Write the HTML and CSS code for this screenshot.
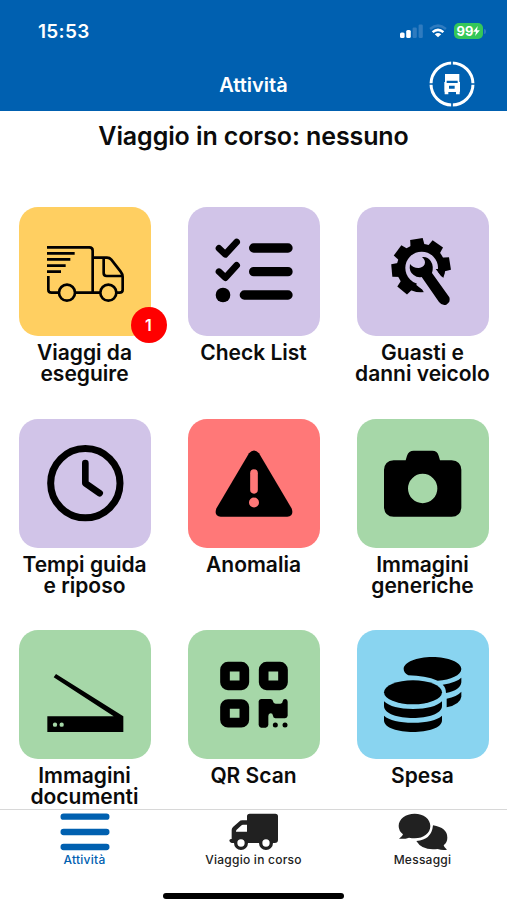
FILE: index.html
```
<!DOCTYPE html>
<html lang="it">

<head>
    <meta charset="utf-8">
    <title>Attività</title>
    <link rel="stylesheet" href="styles.css">
</head>

<body>
    <div class="header">
        <div class="statusbar">
            <span class="time">15:53</span>
            <div class="status-icons">
                <svg class="signal" viewBox="0 0 24 14">
                    <rect x="0" y="8.5" width="4.6" height="5.5" rx="1.5" fill="#fff"/>
                    <rect x="6.2" y="6" width="4.6" height="8" rx="1.5" fill="#fff"/>
                    <rect x="12.6" y="3.4" width="4.2" height="10.6" rx="1.3" fill="#2f7bbf"/>
                    <rect x="18.6" y="0.4" width="4.2" height="13.6" rx="1.3" fill="#2f7bbf"/>
                </svg>
                <svg class="wifi" viewBox="0 0 20 15" fill="none" stroke-width="2.8">
                    <path d="M1.2 5.2Q10 -2.2 18.8 5.2" stroke="#2f7bbf"/>
                    <path d="M4 8.8Q10 3.6 16 8.8" stroke="#fff"/>
                    <path d="M10 14.4L6.4 11Q10 8.2 13.6 11Z" fill="#fff"/>
                </svg>
                <div class="battery">99<svg viewBox="0 0 8 12"><path d="M5.5 0L0 6.8H3.4L2.3 12L8 5.2H4.6Z" fill="#fff"/></svg></div>
                <span class="battery-tip"></span>
            </div>
        </div>
        <div class="titlebar">
            <h1>Attività</h1>
            <svg class="truck-button" viewBox="147 183 138 138">
                <circle cx="216" cy="252" r="63" fill="none" stroke="#fff" stroke-width="9"/>
                <path d="M216 183V198M216 306V321M147 252H162M270 252H285" stroke="#0060b0" stroke-width="5"/>
                <path d="M195 222H238V246H240V275H239V283H228V276H205V283H194V275H193V246H195Z" fill="#fff"/>
                <path d="M200 242H233V249H200ZM207 257H224V266H207Z" fill="#0060b0"/>
            </svg>
        </div>
    </div>

    <div class="content">
        <h2>Viaggio in corso: nessuno</h2>
        <div class="grid">
            <div class="item">
                <div class="tile yellow">
                    <svg viewBox="57 36 396 387" fill="none" stroke="#000" stroke-width="8">
                        <path d="M141 157H268Q278 157 278 167V293M141 175H224M141 193H211M141 212H197M141 230H183"/>
                        <path d="M145 243V284Q145 293 155 293H176M226 293H300M278 188H321Q329 188 334 194L362 230Q368 238 368 245V284Q368 293 358 293H350M311 188V234Q311 243 320 243H368"/>
                        <circle cx="201" cy="293" r="24"/>
                        <circle cx="325" cy="293" r="24"/>
                    </svg>
                    <span class="badge">1</span>
                </div>
                <p>Viaggi da<br>eseguire</p>
            </div>
            <div class="item">
                <div class="tile purple">
                    <svg viewBox="24 36 396 387" fill="none" stroke="#000" stroke-linecap="round" stroke-linejoin="round">
                        <path d="M117 160L136 178L170 141M117 230L136 248L170 211" stroke-width="20"/>
                        <path d="M221 159H324M221 230H324M193 300H324" stroke-width="28"/>
                        <circle cx="129" cy="300" r="22" fill="#000" stroke="none"/>
                    </svg>
                </div>
                <p>Check List</p>
            </div>
            <div class="item">
                <div class="tile purple">
                    <svg viewBox="36 36 396 387">
                        <g transform="translate(228 219)">
                            <circle r="73"/>
                            <path id="tooth" d="M-22 -60L-19 -88H19L22 -60Z" transform="rotate(-9)"/>
                            <use href="#tooth" transform="rotate(44)"/>
                            <use href="#tooth" transform="rotate(90)"/>
                            <use href="#tooth" transform="rotate(-44)"/>
                            <use href="#tooth" transform="rotate(-86)"/>
                            <use href="#tooth" transform="rotate(-131)"/>
                        </g>
                        <path d="M214 270L232 284L260 330H330L300 252L288 243L270 219L228 219Z" fill="#d1c4e8"/>
                        <circle cx="230" cy="219" r="49" fill="#d1c4e8"/>
                        <path d="M198 262L232 285L214 287L196 276ZM272 222L290 244L298 222Z"/>
                        <path d="M195 207Q191 230 206 240Q217 249 230 246L282 321Q291 333 304 329Q318 321 313 307L261 234Q267 213 257 198Q248 184 231 186Q243 196 239 208Q234 218 222 219Q205 220 195 207Z"/>
                    </svg>
                </div>
                <p>Guasti e<br>danni veicolo</p>
            </div>
            <div class="item">
                <div class="tile purple">
                    <svg viewBox="27 25.5 396 387" fill="none" stroke="#000" stroke-linecap="round" stroke-linejoin="round">
                        <circle cx="226" cy="218" r="104" stroke-width="21"/>
                        <path d="M226 158V218L269 248" stroke-width="20"/>
                    </svg>
                </div>
                <p>Tempi guida<br>e riposo</p>
            </div>
            <div class="item">
                <div class="tile red">
                    <svg viewBox="24 25.5 396 387">
                        <path d="M207 128Q222 112 237 128L335 294Q343 316 322 319H122Q101 316 109 294Z"/>
                        <path d="M222 188V238" stroke="#ff7878" stroke-width="23" stroke-linecap="round"/>
                        <circle cx="222" cy="276" r="15" fill="#ff7878"/>
                    </svg>
                </div>
                <p>Anomalia</p>
            </div>
            <div class="item">
                <div class="tile green">
                    <svg viewBox="36 25.5 396 387">
                        <path fill-rule="evenodd" d="M146 149H182L186 136Q191 121 206 121H262Q277 121 281 136L285 149H320Q348 151 349 178V291Q347 318 320 319H146Q119 318 117 291V178Q118 151 146 149ZM233 190A44 44 0 1 0 233 278A44 44 0 1 0 233 190Z"/>
                    </svg>
                </div>
                <p>Immagini<br>generiche</p>
            </div>
            <div class="item">
                <div class="tile green">
                    <svg viewBox="27 30 396 387">
                        <path d="M138 162L340 289V336H112V289H311L131 172Z"/>
                        <circle cx="135" cy="314" r="6.5" fill="#a6d7a8"/>
                        <circle cx="155" cy="314" r="6.5" fill="#a6d7a8"/>
                    </svg>
                </div>
                <p>Immagini<br>documenti</p>
            </div>
            <div class="item">
                <div class="tile green">
                    <svg viewBox="24 30 396 387">
                        <g fill="none" stroke="#000" stroke-width="29">
                            <rect x="135" y="140" width="58" height="56" rx="9"/>
                            <rect x="251" y="140" width="58" height="56" rx="9"/>
                            <rect x="135" y="252" width="58" height="56" rx="9"/>
                        </g>
                        <path d="M243 237H272Q279 238 279 244Q280 251 287 251H301Q308 251 308 244Q309 237 316 237Q323 238 323 245V287Q322 294 315 295H286Q279 294 279 287Q278 280 272 280Q265 281 265 288V315Q264 322 257 323H243Q237 322 236 315V244Q237 238 243 237Z"/>
                        <circle cx="286" cy="315" r="7.5"/>
                        <circle cx="315" cy="315" r="7.5"/>
                    </svg>
                </div>
                <p>QR Scan</p>
            </div>
            <div class="item">
                <div class="tile blue">
                    <svg viewBox="36 30 396 387">
                        <path d="M190 166Q176 158 176 147C176 127 215 111 262 111S349 127 349 147C349 165 317 180 278 182Q240 167 190 166Z"/>
                        <path d="M349 173V187Q346 211 303 219Q303 202 293 194Q335 187 349 173ZM349 215V230Q346 253 305 262V236Q336 230 349 215Z"/>
                        <ellipse cx="204" cy="217" rx="87" ry="36"/>
                        <path d="M117 244Q141 267 204 267T291 244V258C291 306 117 306 117 258ZM117 287Q141 308 204 308T291 287V301C291 348 117 348 117 301Z"/>
                    </svg>
                </div>
                <p>Spesa</p>
            </div>
        </div>
    </div>

    <div class="tabbar">
        <a class="tab active">
            <svg viewBox="181 70 150 114">
                <path d="M192 81H320M192 127H320M192 172H320" stroke="#0060b0" stroke-width="19" stroke-linecap="round"/>
            </svg>
            <span>Attività</span>
        </a>
        <a class="tab">
            <svg viewBox="686 70 150 114" fill="#212121">
                <path fill-rule="evenodd" d="M748 72H825Q833 72 833 80V151Q833 160 823 160H694Q687 159 687 152Q688 148 694 148V121Q694 116 698 112L716 96Q720 92 726 92H740V80Q740 72 748 72ZM707 126H740V105H728Q725 105 722 108L709 120Q707 122 707 126Z"/>
                <circle cx="722" cy="160" r="16" fill="#fff" stroke="#212121" stroke-width="10"/>
                <circle cx="797" cy="160" r="16" fill="#fff" stroke="#212121" stroke-width="10"/>
            </svg>
            <span>Viaggio in corso</span>
        </a>
        <a class="tab">
            <svg viewBox="1191 70 150 114" fill="#212121">
                <path d="M1241 72C1268 72 1288 88 1288 109S1268 146 1241 146Q1233 146 1224 144Q1210 149 1194 147Q1205 140 1206 134Q1193 124 1193 109C1193 88 1214 72 1241 72Z"/>
                <path d="M1296 107Q1339 114 1339 144Q1339 158 1328 167Q1329 174 1338 180Q1323 182 1310 178Q1264 184 1246 154Q1292 151 1296 107Z"/>
            </svg>
            <span>Messaggi</span>
        </a>
    </div>
    <div class="home-indicator"></div>
</body>

</html>
```
FILE: styles.css
```
* {
    box-sizing: border-box;
}

body {
    margin: 0;
    height: 900px;
    display: flex;
    flex-direction: column;
    overflow: hidden;
    background-color: #fff;
    color: #0b0b0b;
    font-family: Inter, "Liberation Sans", sans-serif;
}

h1, h2, p {
    margin: 0;
}

svg {
    display: block;
}

/* Blue header with the phone status bar */
.header {
    height: 111px;
    flex: none;
    background-color: #0060b0;
    color: #fff;
}

.statusbar {
    height: 58px;
    padding: 4px 21px 0 38px;
    display: flex;
    align-items: center;
    justify-content: space-between;
}

.time {
    font-size: 19px;
    font-weight: 600;
    letter-spacing: 0.3px;
}

.status-icons {
    display: flex;
    align-items: center;
}

.signal {
    width: 24px;
    height: 14px;
    margin-right: 5px;
}

.wifi {
    width: 18px;
    height: 14px;
    margin-right: 7px;
}

.battery {
    width: 29px;
    height: 16px;
    border-radius: 5px;
    background-color: #34c759;
    display: flex;
    align-items: center;
    justify-content: center;
    font-size: 13px;
    font-weight: 700;
}

.battery svg {
    width: 7px;
    height: 10px;
}

.battery-tip {
    width: 2px;
    height: 5px;
    margin-left: 1px;
    border-radius: 0 2px 2px 0;
    background-color: #2f7bbf;
}

.titlebar {
    height: 53px;
    padding: 0 32px;
    display: grid;
    grid-template-columns: 46px 1fr 46px;
    align-items: center;
}

.titlebar h1 {
    grid-column: 2;
    text-align: center;
    font-size: 20px;
    font-weight: 600;
}

.truck-button {
    width: 46px;
    height: 46px;
    margin-bottom: 2px;
}

/* Activities */
.content {
    flex: none;
    height: 698px;
    overflow: hidden;
}

.content h2 {
    height: 96px;
    padding-top: 9px;
    text-align: center;
    font-size: 25px;
    line-height: 32px;
    font-weight: 600;
    letter-spacing: -0.1px;
}

.grid {
    display: grid;
    grid-template-columns: repeat(3, 1fr);
    grid-auto-rows: 211.5px;
}

.item {
    display: flex;
    flex-direction: column;
    align-items: center;
}

.item p {
    margin-top: 6px;
    text-align: center;
    white-space: nowrap;
    font-size: 21px;
    line-height: 21px;
    font-weight: 600;
}

.tile {
    position: relative;
    width: 132px;
    height: 129px;
    border-radius: 19px;
}

.tile svg {
    width: 132px;
    height: 129px;
}

.yellow {
    background-color: #ffcf61;
}

.purple {
    background-color: #d1c4e8;
}

.red {
    background-color: #ff7878;
}

.green {
    background-color: #a6d7a8;
}

.blue {
    background-color: #89d4f0;
}

.badge {
    position: absolute;
    right: -16px;
    bottom: -7px;
    width: 36px;
    height: 36px;
    border-radius: 50%;
    background-color: #ff0000;
    color: #fff;
    text-align: center;
    font-size: 16px;
    line-height: 36px;
    font-weight: 600;
}

/* Bottom tabs */
.tabbar {
    flex: none;
    height: 84px;
    display: grid;
    grid-template-columns: repeat(3, 1fr);
    border-top: 1px solid #d8d8d8;
}

.tab {
    display: flex;
    flex-direction: column;
    align-items: center;
    padding-top: 3px;
    color: #212121;
    font-size: 12px;
    line-height: 18px;
    font-weight: 500;
    letter-spacing: 0.25px;
}

.tab.active {
    color: #0060b0;
}

.tab svg {
    width: 50px;
    height: 38px;
}

.home-indicator {
    flex: none;
    width: 181px;
    height: 6px;
    margin: 0 auto;
    border-radius: 3px;
    background-color: #000;
}
```
